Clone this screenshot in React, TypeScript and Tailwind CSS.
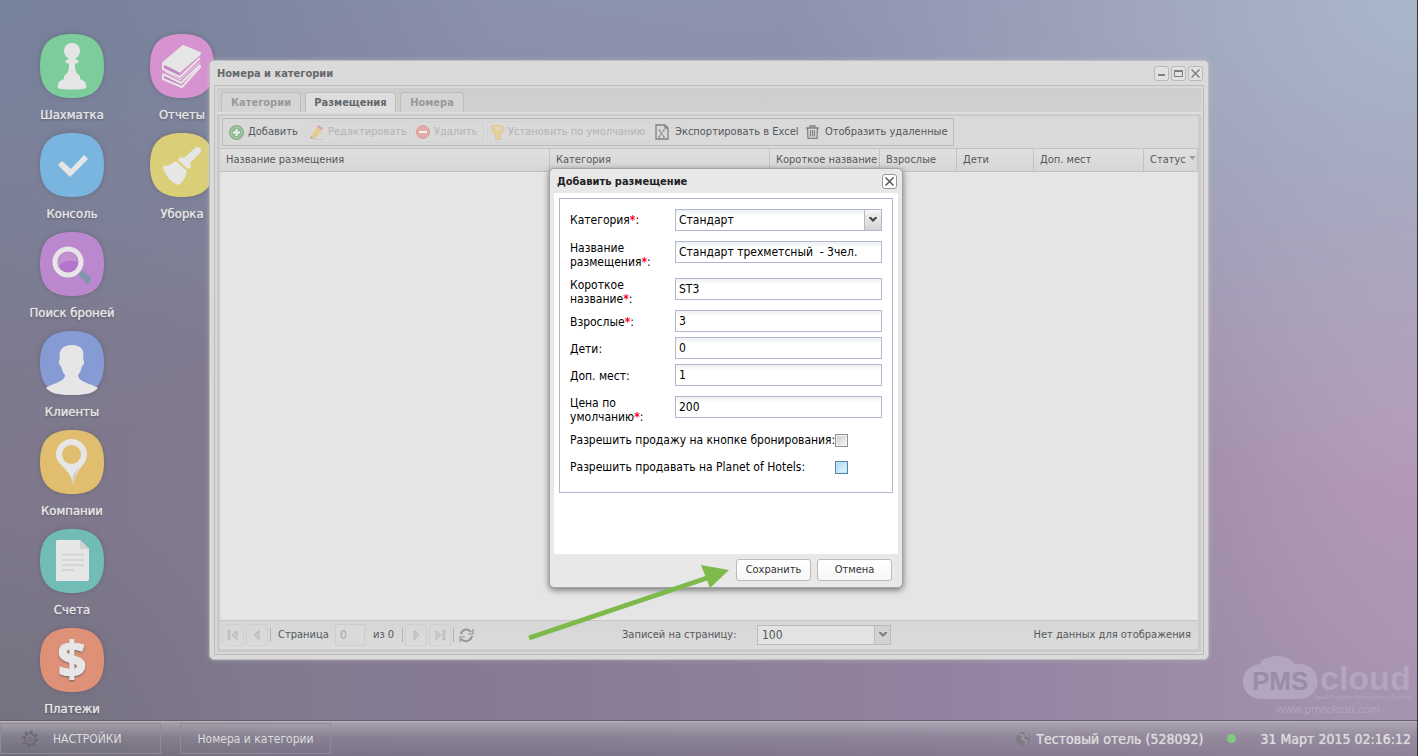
import React from 'react';

const FONT = "font-['DejaVu_Sans_Condensed','Noto_Sans',sans-serif]";

const Pawn = () => (
  <g fill="#e6e6e6">
    <circle cx="32" cy="17" r="8" />
    <path d="M25 27c3-1 3-2 4-3h6c1 1 1 2 4 3v1l-4 2c0 7 1 9 5 12v3c3 1 6 3 6 6 1 1 0 2 0 3-3 2-25 2-28 0 0-1-1-2 0-3 0-3 3-5 6-6v-3c4-3 5-5 5-12l-4-2z" />
  </g>
);

const Books = () => (
  <g fill="none" stroke="#e6e6e6" strokeWidth="2" strokeLinejoin="round">
    <path d="M13 30l16 8v6l-16-9zM13 41l18 7v5l-18-9z" fill="#c486c0" stroke="none" />
    <path d="M13 29l20-17 17 7-21 18z" fill="#e6e6e6" />
    <path d="M13 29v6l17 8 20-19M29 38l21-18" />
    <path d="M15 37l15 9 20-18" strokeWidth="1" />
    <path d="M13 40v5l19 8 18-20v-2M13 40l18 9 19-18" />
  </g>
);

const Check = () => <path d="M18 32l4-4 9 8 13-14 4 4-18 18z" fill="#e6e6e6" />;

const Broom = () => (
  <g fill="#e6e6e6">
    <path d="M34 25L45 15c4-3 8 2 5 5L40 30l1 4-3 2-10-9 2-3z" />
    <path d="M26 28l11 10c-1 6-4 10-8 14C21 50 14 41 13 33c5 0 9-2 13-5z" />
  </g>
);

const Search = () => (
  <g>
    <path d="M38 42l4-4 9 8c1 3-2 6-4 6z" fill="#7f97ae" />
    <circle cx="28" cy="30" r="13" fill="#b474cb" stroke="#e6e6e6" strokeWidth="5" />
    <path d="M18 36c3-7 11-9 20-6A10 10 0 0018 30z" fill="#c193cf" />
  </g>
);

const Person = () => (
  <path d="M6 57c7-5 19-6 19-13-3-3-3-6-4-9-2-1-3-4-1-7-2-9 3-14 12-14s13 5 11 14c2 3 1 6-1 7-1 3-1 6-4 9 0 7 12 8 20 13-5 5-10 7-26 7S11 62 6 57z" fill="#e6e6e6" />
);

const Pin = () => (
  <g>
    <path d="M31.500 9C23 9 16 16 16 24c0 12 14 13 17.500 31C36 37 47 36 47 24 47 16 40 9 31.500 9zm0 6a9.500 9.500 0 110 19 9.500 9.500 0 010-19z" fill="#e6e6e6" fillRule="evenodd" />
    <path d="M33.500 55c-2-6-1-12 5-17-3 5-4 11-5 17z" fill="#cfcdc8" />
  </g>
);

const Sheet = () => (
  <g>
    <path d="M17 11h23l9 9v30c0 1-1 2-1 2H17c-1 0-1-1-1-2V12z" fill="#e6e6e6" />
    <path d="M40 11l9 9h-9z" fill="#d2d2d2" />
    <path d="M22 25.500h22M22 31h22M22 36h22M22 41h12" stroke="#d5d5d5" strokeWidth="2" />
  </g>
);

const Dollar = () => (
  <text x="32" y="49" textAnchor="middle" fontSize="50" fontWeight="800" fontFamily="Open Sans" fill="#e6e6e6">$</text>
);

const shortcuts = [
  { title: 'Шахматка', color: '#7dcc9c', Icon: Pawn },
  { title: 'Консоль', color: '#79b5de', Icon: Check },
  { title: 'Поиск броней', color: '#bb88cd', Icon: Search },
  { title: 'Клиенты', color: '#869bd4', Icon: Person },
  { title: 'Компании', color: '#e0bd6f', Icon: Pin },
  { title: 'Счета', color: '#72bcb6', Icon: Sheet },
  { title: 'Платежи', color: '#df9178', Icon: Dollar },
  { title: 'Отчеты', color: '#d693cf', Icon: Books },
  { title: 'Уборка', color: '#dbce78', Icon: Broom },
];

const columns = [
  { title: 'Название размещения', width: '' },
  { title: 'Категория', width: 'w-[220px]' },
  { title: 'Короткое название', width: 'w-[110px]' },
  { title: 'Взрослые', width: 'w-[77px]' },
  { title: 'Дети', width: 'w-[77px]' },
  { title: 'Доп. мест', width: 'w-[110px]' },
  { title: 'Статус', width: 'w-[54px]' },
];

const fields = [
  { id: 'name', lines: ['Название', 'размещения'], value: 'Стандарт трехметсный  - 3чел.', required: true, row: 'h-[37px]' },
  { id: 'short', lines: ['Короткое', 'название'], value: 'ST3', required: true, row: 'h-8' },
  { id: 'adults', lines: ['Взрослые'], value: '3', required: true, row: 'h-[27px]' },
  { id: 'children', lines: ['Дети'], value: '0', required: false, row: 'h-[27px]' },
  { id: 'extra', lines: ['Доп. мест'], value: '1', required: false, row: 'h-8' },
  { id: 'price', lines: ['Цена по', 'умолчанию'], value: '200', required: true, row: 'h-[37px]' },
];

const Star = () => <span className="font-bold text-[#ff0022]">*</span>;

const Chevron = ({ color }: { color: string }) => (
  <svg className="w-2 h-[6px]" viewBox="0 0 8 6">
    <path d="M0 0h2l2 2 2-2h2v1L4 5 0 1z" fill={color} />
  </svg>
);

const Cross = ({ color }: { color: string }) => (
  <svg className="w-[9px] h-[9px]" viewBox="0 0 9 9">
    <path d="M.5.5l8 8M8.500.5l-8 8" stroke={color} strokeWidth="1.500" />
  </svg>
);

const Separator = () => <span className="w-px h-[14px] bg-[#b3b3b3]" />;

const PageButton = ({ label, d }: { label: string; d: string }) => (
  <button aria-label={label} className="w-[22px] h-[22px] flex items-center justify-center rounded-[3px] border border-[#d0d0d0]">
    <svg className="w-3 h-3" viewBox="0 0 12 12">
      <path d={d} fill="#c8c8c8" stroke="#b9b9b9" strokeWidth=".8" />
    </svg>
  </button>
);

const Toolbar = () => (
  <div className="flex bg-[#d9d9d9] p-[2px]">
    <div className="flex items-center gap-[3px] w-[732px] h-7 pl-[2px] border border-[#bdb9b9] text-[#55585c] whitespace-nowrap [&_svg]:shrink-0">
      <button className="flex items-center gap-1 w-[77px] h-[22px] pl-1">
        <svg className="w-[15px] h-[15px]" viewBox="0 0 15 15">
          <circle cx="7.500" cy="7.500" r="7" fill="#8cba8a" stroke="#86ab85" />
          <circle cx="7.500" cy="7.500" r="5.500" fill="none" stroke="#b4d0b2" />
          <path d="M7.500 4v7M4 7.500h7" stroke="#f0f0f0" strokeWidth="2" />
        </svg>
        Добавить
      </button>
      <button className="flex items-center gap-1 w-[105px] h-[22px] pl-1 rounded-[3px] border border-[#d3d3d3] text-[#b4b4b4]">
        <svg className="w-[14px] h-[15px]" viewBox="0 0 14 15">
          <path d="M1 11L7 2l5 3-6 8-4 1z" fill="#e3cb92" />
          <path d="M7 2l1-2 5 3-1 2z" fill="#d3a5aa" />
          <path d="M1 11l-1 3 4-1z" fill="#aaa" />
          <path d="M4 14.500h9" stroke="#c8c8c8" />
        </svg>
        Редактировать
      </button>
      <button className="flex items-center gap-1 w-[71px] h-[22px] pl-[2px] rounded-[3px] border border-[#d3d3d3] text-[#b4b4b4]">
        <svg className="w-[14px] h-[14px]" viewBox="0 0 14 14">
          <circle cx="7" cy="7" r="6.500" fill="#e3aaa8" stroke="#d79c9b" />
          <path d="M3 7h8" stroke="#eee" strokeWidth="2" />
        </svg>
        Удалить
      </button>
      <button className="flex items-center gap-1 w-[163px] h-[22px] pl-[2px] rounded-[3px] border border-[#d3d3d3] text-[#b4b4b4]">
        <svg className="w-[14px] h-[15px]" viewBox="0 0 14 15">
          <path d="M3 0h8l2 2v5l-3 2v6H6l-1-2 1-1-1-2 1-1-3-1-1-2V2z" fill="#e6d199" stroke="#d3bd83" strokeWidth=".6" />
          <path d="M5 3h5" stroke="#d9d9d9" strokeWidth="2" />
        </svg>
        Установить по умолчанию
      </button>
      <button className="flex items-center gap-[6px] w-[147px] h-[22px] pl-[2px]">
        <svg className="w-[14px] h-4" viewBox="0 0 14 16">
          <path d="M1 1h9l3 3v11H1zM10 1v3h3" fill="none" stroke="#808080" strokeWidth="1.300" />
          <path d="M4 6l5 7M9 6l-5 7M3.500 6h2M8 6h2M3 13h2M8 13h2" stroke="#808080" />
        </svg>
        Экспортировать в Excel
      </button>
      <button className="flex items-center gap-[6px] h-[22px] pl-[3px]">
        <svg className="w-[13px] h-[14px]" viewBox="0 0 13 14">
          <path d="M0 3h13M4 2.500V1h5v1.500M1.500 3l.5 10.300h9l.5-10.300" fill="none" stroke="#808080" strokeWidth="1.300" />
          <path d="M4.500 5v6.500M6.500 5v6.500M8.500 5v6.500" stroke="#808080" strokeWidth="1.200" />
        </svg>
        Отобразить удаленные
      </button>
    </div>
  </div>
);

const PagingBar = () => (
  <div className="flex items-center h-[29px] pl-[2px] pr-[7px] border-t border-[#c6c6c6] bg-gradient-to-b from-[#d6d6d6] to-[#dcdcdc] text-[#55585c] whitespace-nowrap">
    <div className="flex items-center w-[400px] gap-[2px]">
      <PageButton label="Первая" d="M1 1h2v10H1zM10 1v10L5 6z" />
      <PageButton label="Предыдущая" d="M8 1v10L3 6z" />
      <Separator />
      <label htmlFor="page" className="w-[60px] pl-[5px]">Страница</label>
      <input id="page" defaultValue="0" className="w-[30px] h-[22px] px-1 border border-[#cdcdcd] bg-[#dadada] text-[12px] text-[#a5a5a5]" />
      <span className="w-[33px] pl-[6px]">из 0</span>
      <Separator />
      <PageButton label="Следующая" d="M4 1v10l5-5z" />
      <PageButton label="Последняя" d="M2 1v10l5-5zM9 1h2v10H9z" />
      <Separator />
      <button aria-label="Обновить" className="pl-[3px]">
        <svg className="w-[15px] h-[15px]" viewBox="0 0 15 15" fill="none" stroke="#959595" strokeWidth="2">
          <path d="M2 6C3 1 9 0 12 4M13 8c-1 5-7 7-11 3" />
          <path d="M14 1v5H9M1 14V9h5" strokeWidth="1.200" />
        </svg>
      </button>
    </div>
    <label htmlFor="per-page" className="w-[135px]">Записей на страницу:</label>
    <div className="relative">
      <select id="per-page" className="block w-[134px] h-5 pl-1 appearance-none border border-[#b9bac4] bg-[#e2e4e4] text-[12px]">
        <option>100</option>
      </select>
      <span className="absolute top-px right-px w-4 h-[18px] flex items-center justify-center border-l border-[#b9bac4] bg-[#d2d2d2] pointer-events-none">
        <Chevron color="#7d7d7d" />
      </span>
    </div>
    <span className="flex-1 text-right">Нет данных для отображения</span>
  </div>
);

const RoomsWindow = () => (
  <section className="absolute left-[209px] right-[208px] top-[60px] bottom-[60px] flex flex-col px-1 pb-1 rounded-[5px] border border-[#bdbdbd] bg-[#dadada] shadow-[0_0_5px_rgba(200,200,210,0.5)] text-[11px]">
    <header className="flex items-center justify-between h-6 pl-[3px] pr-px">
      <h1 className="pt-px font-bold text-[#66686b]">Номера и категории</h1>
      <div className="flex gap-[2px]">
        <button aria-label="Свернуть" className="w-[15px] h-[15px] flex items-center justify-center rounded-[3px] border border-[#b8b8b8] bg-[#e2e2e2]">
          <span className="w-[7px] h-[2px] mt-1 bg-[#808080]" />
        </button>
        <button aria-label="Развернуть" className="w-[15px] h-[15px] flex items-center justify-center rounded-[3px] border border-[#b8b8b8] bg-[#e2e2e2]">
          <span className="w-[9px] h-[7px] border border-t-2 border-[#808080]" />
        </button>
        <button aria-label="Закрыть" className="w-[15px] h-[15px] flex items-center justify-center rounded-[3px] border border-[#b8b8b8] bg-[#e2e2e2]">
          <Cross color="#808080" />
        </button>
      </div>
    </header>
    <div className="flex-1 flex flex-col p-[2px] border border-[#c0bbbb] bg-[#d8d8d8]">
      <nav className="flex items-end gap-1 h-6 pl-1 bg-gradient-to-b from-[#cdcdcd] to-[#d1d1d1] font-bold text-[#999]">
        <button className="w-[80px] h-5 rounded-t-[4px] border border-b-0 border-[#bcbcbc] bg-[#d5d5d5]">Категории</button>
        <button className="w-[91px] h-5 rounded-t-[4px] border border-b-0 border-[#bcbcbc] bg-[#dedede] text-[#66686b]">Размещения</button>
        <button className="w-[64px] h-5 rounded-t-[4px] border border-b-0 border-[#bcbcbc] bg-[#d5d5d5]">Номера</button>
      </nav>
      <div className="h-[2px] bg-[#dedede]" />
      <div className="flex-1 flex flex-col border-[3px] border-t-2 border-[#cbcbcb] bg-[#e5e5e5]">
        <Toolbar />
        <table className="w-full table-fixed border-collapse text-[#55585c]">
          <thead>
            <tr className="h-[23px] bg-gradient-to-b from-[#e0e0e0] to-[#d6d6d6]">
              {columns.map((col) => (
                <th key={col.title} className={`${col.width} p-0 pl-[6px] text-left font-normal whitespace-nowrap border-y border-r border-[#c2c2c2]`}>
                  {col.title}
                  {col.title === 'Статус' && (
                    <svg className="inline w-[7px] h-1 ml-[3px] mb-1" viewBox="0 0 7 4">
                      <path d="M0 0h7L3.500 4z" fill="#a0a0a0" />
                    </svg>
                  )}
                </th>
              ))}
            </tr>
          </thead>
        </table>
        <div className="flex-1" />
        <PagingBar />
      </div>
    </div>
  </section>
);

const PlacementDialog = () => (
  <section role="dialog" aria-labelledby="dialog-title" className="absolute left-[549px] top-[168px] w-[354px] px-1 rounded-[5px] border border-[#a4a4a4] bg-[#e8e8e8] text-black shadow-[0_2px_6px_rgba(0,0,0,0.5)]">
    <header className="flex items-center justify-between h-6 pl-[3px] pr-px">
      <h2 id="dialog-title" className="pt-px text-[11px] font-bold text-[#222]">Добавить размещение</h2>
      <button aria-label="Закрыть" className="w-[15px] h-[15px] flex items-center justify-center rounded-[3px] border border-[#999] bg-white">
        <Cross color="#555" />
      </button>
    </header>
    <form id="placement" className="h-[361px] p-[5px] bg-white">
      <div className="h-[295px] px-[10px] pt-[10px] border border-[#b5b6cb]">
        <div className="flex items-start h-8">
          <label htmlFor="category" className="w-[105px] pt-1 leading-[14px]">Категория<Star />:</label>
          <div className="relative flex-1">
            <select id="category" className="block w-full h-[22px] pl-[3px] appearance-none border border-[#b5b6cb] bg-gradient-to-b from-[#eef2f2] to-white to-30%">
              <option>Стандарт</option>
            </select>
            <span className="absolute top-px right-px w-[17px] h-5 flex items-center justify-center border-l border-[#b5b6cb] bg-gradient-to-b from-[#f4f4f4] to-[#d4d4d4] pointer-events-none">
              <Chevron color="#444" />
            </span>
          </div>
        </div>
        {fields.map((field) => (
          <div key={field.id} className={`flex items-start ${field.row}`}>
            <label htmlFor={field.id} className={`w-[105px] leading-[14px] ${field.lines.length === 1 ? 'pt-[5px]' : ''}`}>
              {field.lines[0]}
              {field.lines.length > 1 && <><br />{field.lines[1]}</>}
              {field.required && <Star />}:
            </label>
            <input id={field.id} defaultValue={field.value} className="flex-1 min-w-0 h-[22px] px-[3px] border border-[#b5b6cb] bg-gradient-to-b from-[#eef2f2] to-white to-30%" />
          </div>
        ))}
        <div className="flex items-center h-[14px] mb-[13px]">
          <label htmlFor="button-sale" className="w-[265px] whitespace-nowrap">Разрешить продажу на кнопке бронирования:</label>
          <input id="button-sale" type="checkbox" className="w-[13px] h-[13px] appearance-none border border-[#8e8f8f] bg-gradient-to-br from-[#c8cad0] to-[#f6f6f6] shadow-[inset_0_0_0_1px_#f4f4f4]" />
        </div>
        <div className="flex items-center h-[14px]">
          <label htmlFor="planet-sale" className="w-[265px] whitespace-nowrap">Разрешить продавать на Planet of Hotels:</label>
          <input id="planet-sale" type="checkbox" className="w-[13px] h-[13px] appearance-none border border-[#5586a3] bg-gradient-to-br from-[#a9d9f5] to-[#e4f6ff] shadow-[inset_0_0_0_1px_#bfe4f8]" />
        </div>
      </div>
    </form>
    <footer className="flex justify-end gap-[6px] pt-[5px] pb-[6px] pr-[6px] text-[11px] text-[#333]">
      <button type="submit" form="placement" className="w-[75px] h-[22px] rounded-[3px] border border-[#bbb] bg-gradient-to-b from-white to-[#f6f6f6]">Сохранить</button>
      <button type="button" className="w-[75px] h-[22px] rounded-[3px] border border-[#bbb] bg-gradient-to-b from-white to-[#f6f6f6]">Отмена</button>
    </footer>
  </section>
);

const Logo = () => (
  <svg className="absolute right-1 bottom-0 w-[170px] h-[64px] overflow-visible" viewBox="0 0 170 64" fill="#b3a6be">
    <path d="M19 43C-6 43-6 10 17 8 20-2 45-3 51 8c30-4 31 35 5 35z" />
    <text x="9" y="34" fontSize="26" fontWeight="700" fontFamily="Liberation Sans" fill="#9b8ca9">PMS</text>
    <text x="77" y="34" fontSize="34" fontWeight="700" fontFamily="Liberation Sans">cloud</text>
    <text x="168" y="43" textAnchor="end" fontSize="6" fontFamily="Liberation Sans">SaaS Property Management System</text>
    <text x="33" y="57" fontSize="11" fontFamily="Open Sans">www.pmscloud.com</text>
  </svg>
);

const Taskbar = () => (
  <footer className="flex items-center h-9 pr-[6px] border-t border-[#645f6a] bg-gradient-to-b from-[#aea8b4]/90 via-[#8c8694]/60 via-45% to-[#6d6876]/40 text-[#dcdcdc] shadow-[inset_0_1px_0_#b8b3bd] whitespace-nowrap [text-shadow:0_0_1px_#dcdcdc]">
    <button className="flex items-center w-[161px] h-[31px] pl-5 gap-[14px] border border-[#8f8a96] text-[12px]">
      <svg className="w-[18px] h-[18px]" viewBox="0 0 18 18" fill="none" stroke="#6c6872">
        <circle cx="9" cy="9" r="5.500" strokeWidth="1.500" />
        <circle cx="9" cy="9" r="2" />
        <circle cx="9" cy="9" r="7.500" strokeWidth="2" strokeDasharray="2.500 3.390" />
      </svg>
      НАСТРОЙКИ
    </button>
    <button className="w-[151px] h-[31px] ml-[19px] border border-[#8f8a96] text-[12px]">Номера и категории</button>
    <div className="flex items-center ml-auto text-[14px]">
      <svg className="w-[14px] h-[14px] mr-[6px]" viewBox="0 0 14 14">
        <circle cx="7" cy="7" r="7" fill="#807b87" />
        <path d="M3 2l5 2-2 3 5 2-2 4M9 1l3 4" fill="none" stroke="#9d98a3" strokeWidth="1.500" />
      </svg>
      <span>Тестовый отель (528092)</span>
      <span className="w-[9px] h-[9px] mx-6 rounded-full bg-[#7fca7f]" />
      <time>31 Март 2015 02:16:12</time>
    </div>
  </footer>
);

const App: React.FC = () => {
  return (
    <div className={`${FONT} min-h-screen flex flex-col overflow-hidden border-r border-[#33303a] text-[12px] leading-4 bg-[radial-gradient(ellipse_20%_35%_at_0%_100%,#73717f,transparent),radial-gradient(ellipse_35%_60%_at_0%_0%,#76819a,transparent),radial-gradient(ellipse_45%_65%_at_100%_0%,#a9b7ca,transparent),radial-gradient(ellipse_80%_60%_at_45%_-10%,#8c97b4,transparent),radial-gradient(ellipse_20%_45%_at_100%_55%,#b59ab8,transparent),linear-gradient(90deg,#7e788b,#867b93_35%,#93829f_65%,#a593b0)]`}>
      <main className="relative flex-1 min-h-[720px]">
        <div className="grid grid-flow-col grid-rows-[repeat(7,88px)] auto-cols-[110px] gap-y-[11px] pt-[34px] pl-[17px]">
          {shortcuts.map(({ title, color, Icon }) => (
            <button key={title} className="flex flex-col items-center gap-[9px] text-[13px] text-[#e4e4e4] whitespace-nowrap [text-shadow:0_0_1px_#e4e4e4,0_1px_2px_rgba(60,60,70,0.8)]">
              <svg className="w-16 h-16 overflow-visible drop-shadow-[0_0_2px_rgba(80,80,90,0.5)]" viewBox="0 0 64 64">
                <path d="M32 0C54 0 64 10 64 32S54 64 32 64 0 54 0 32 10 0 32 0z" fill={color} />
                <Icon />
              </svg>
              {title}
            </button>
          ))}
        </div>
        <Logo />
        <RoomsWindow />
        <PlacementDialog />
        <svg className="absolute left-[528px] top-[564px] w-[202px] h-[78px] pointer-events-none" viewBox="0 0 202 78">
          <path d="M1 74L182 13" stroke="#7eb94c" strokeWidth="5" />
          <path d="M173 1l28 5-19 18z" fill="#7eb94c" />
        </svg>
      </main>
      <Taskbar />
    </div>
  );
};

export default App;
